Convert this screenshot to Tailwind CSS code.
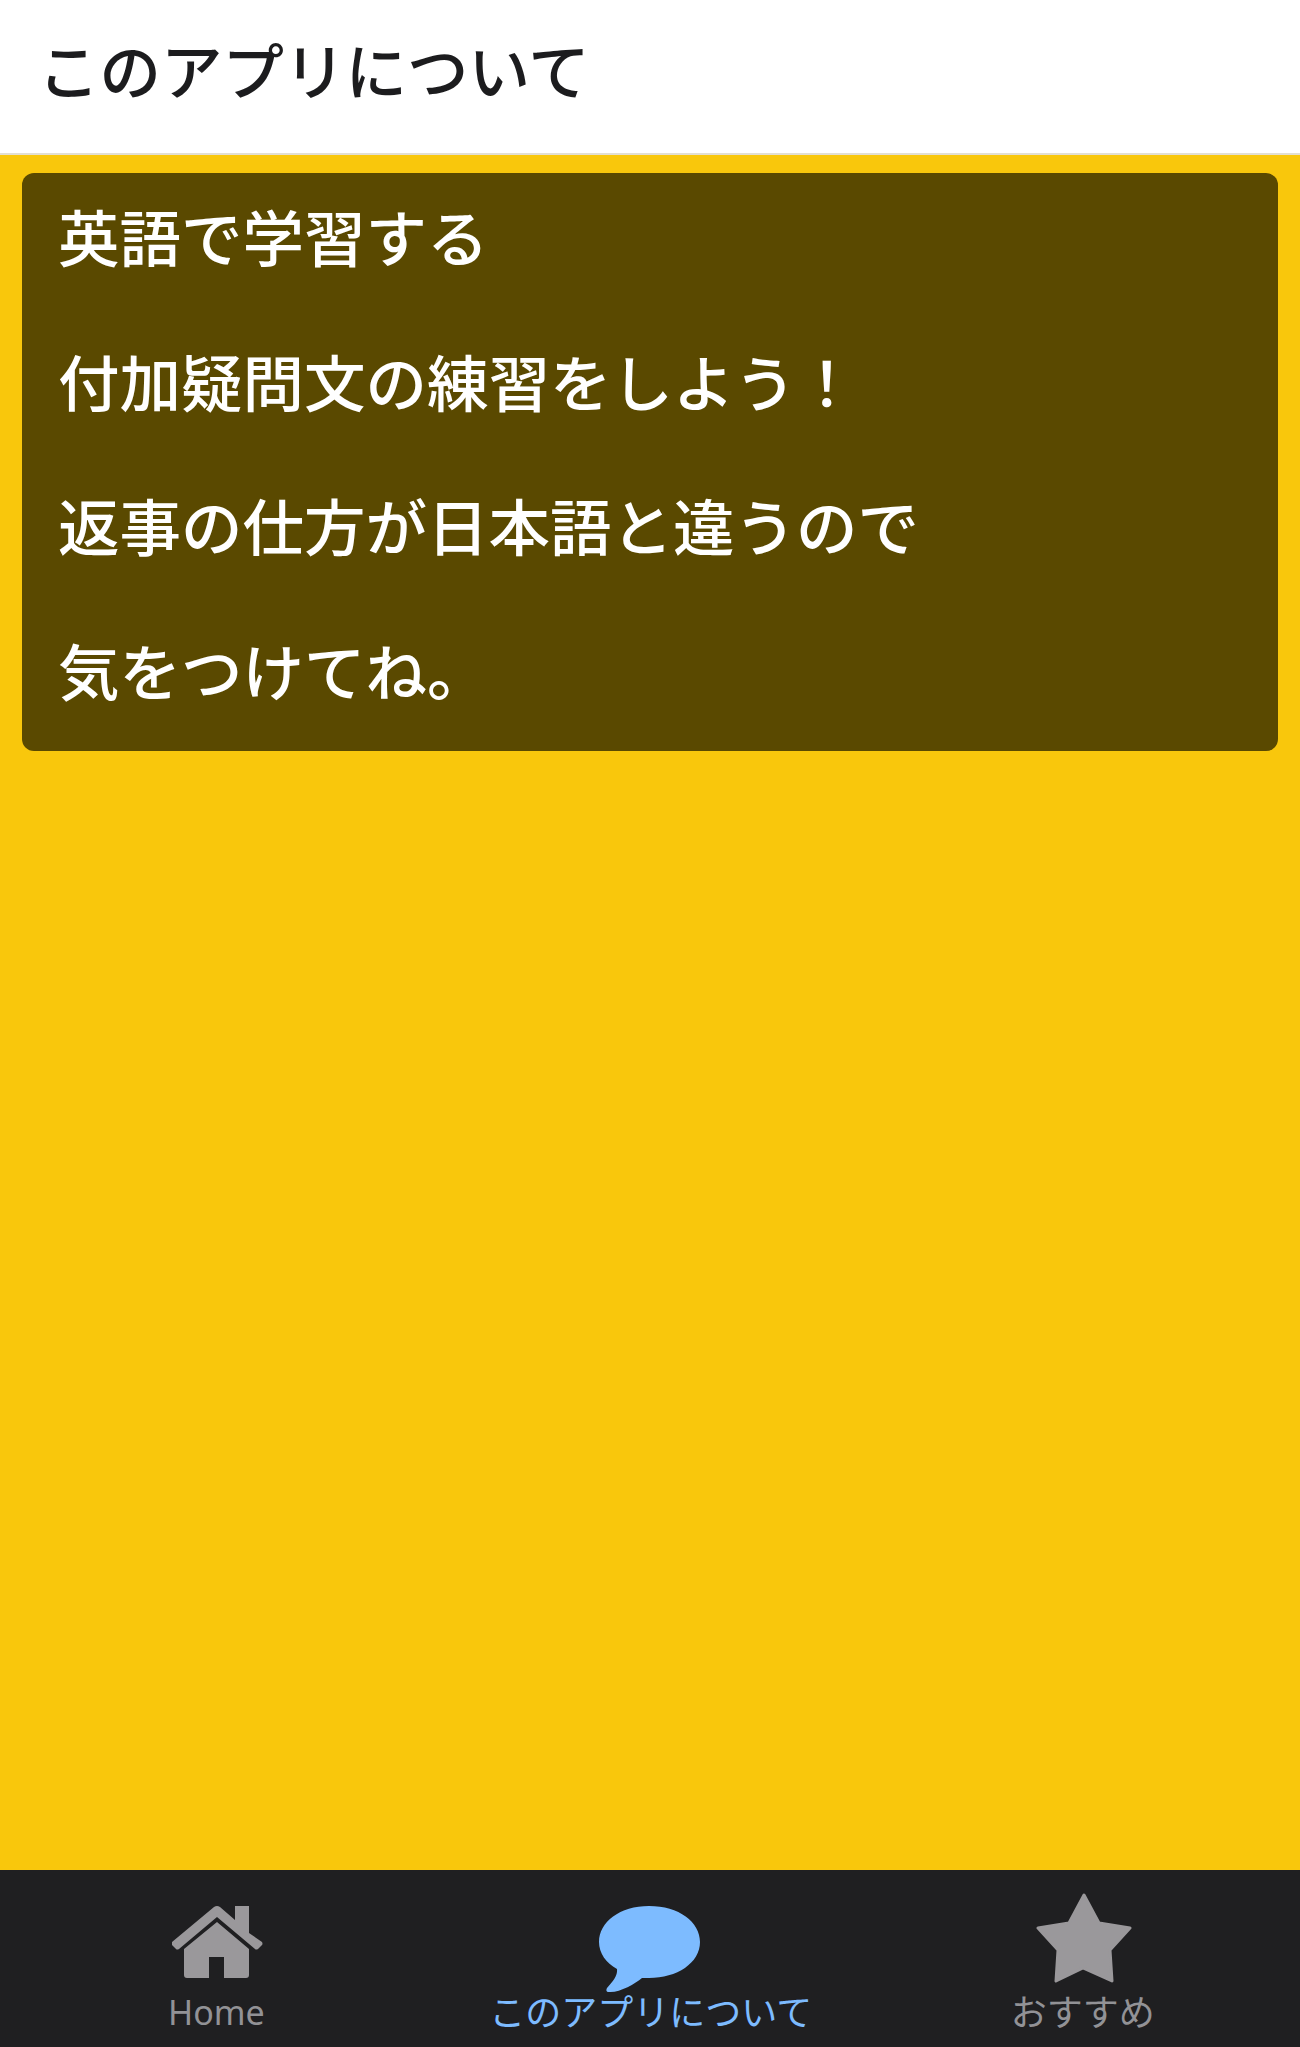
<!DOCTYPE html>
<html lang="ja">
<head>
<meta charset="utf-8">
<script src="https://cdn.jsdelivr.net/npm/@tailwindcss/browser@4"></script>
</head>
<body class="m-0">
<div class="w-[1300px] h-[2047px] flex flex-col bg-[#f9c70c] font-['Noto_Sans_CJK_JP','Noto_Sans',sans-serif]">
  <header class="h-[155px] shrink-0 bg-white border-b-2 border-[#e3dfd2] flex items-center pl-[38px] pb-[16px]">
    <h1 class="text-[61.5px] leading-none font-medium text-[#1c1c1e]">このアプリについて</h1>
  </header>
  <main class="flex-1 px-[22px] pt-[18px]">
    <div class="h-[578px] rounded-[12px] bg-[#5a4900] pl-[36px] text-white text-[61.5px] font-medium leading-[144.5px]">
      <p class="-translate-y-[9px]">英語で学習する</p>
      <p class="-translate-y-[9px]">付加疑問文の練習をしよう！</p>
      <p class="-translate-y-[9px]">返事の仕方が日本語と違うので</p>
      <p class="-translate-y-[9px]">気をつけてね。</p>
    </div>
  </main>
  <nav class="h-[177px] shrink-0 bg-[#1f1f21] grid grid-cols-3 text-[#929296] text-[36px] leading-none">
    <div class="relative flex flex-col items-center">
      <svg class="absolute left-[172px] top-[35px]" width="92" height="74" viewBox="0 0 92 74"><path fill="#9a989b" d="M45 17 L77 44 V70 q0 3-3 3 H52 V52 H37 V73 H15 q-3 0-3-3 V44 Z"/><path fill="#9a989b" d="M42 2 Q45 0 48 2 L63 15 V1 H77 V28 L90 37 q1 2 0 3 L86 44 q-2 1-3 0 L45 12 L7 44 q-2 1-3 0 L0 40 q-1-1 0-3 Z"/></svg>
      <span class="absolute top-[122px] left-[168px] text-[34px] font-['Noto_Sans',sans-serif] leading-[40px]">Home</span>
    </div>
    <div class="relative flex flex-col items-center text-[#7dbbff]">
      <svg class="absolute left-[166px] top-[36px]" width="102" height="88" viewBox="0 0 102 88"><path fill="#7dbbff" d="M50 0 C80 0 101 16 101 36 C101 57 78 72 50 72 C47 72 45 72 43 72 C36 78 20 87 10 86 C7 86 7 84 8 82 C13 76 19 70 18 63 C7 57 0 47 0 36 C0 16 21 0 50 0 Z"/></svg>
      <span class="absolute top-[114px] left-[56px] w-[322px] whitespace-nowrap text-center leading-[52px]">このアプリについて</span>
    </div>
    <div class="relative flex flex-col items-center">
      <svg class="absolute left-[169px] top-[23px]" width="96" height="92" viewBox="0 0 96 92"><path fill="#9a989b" stroke="#9a989b" stroke-width="3" stroke-linejoin="round" d="M48 2 L63 30 L94 35 L74 57 L76 88 L47 75 L20 88 L22 57 L2 35 L33 30 Z"/></svg>
      <span class="absolute top-[114px] left-[144px] w-[146px] whitespace-nowrap leading-[52px]">おすすめ</span>
    </div>
  </nav>
</div>
</body>
</html>
